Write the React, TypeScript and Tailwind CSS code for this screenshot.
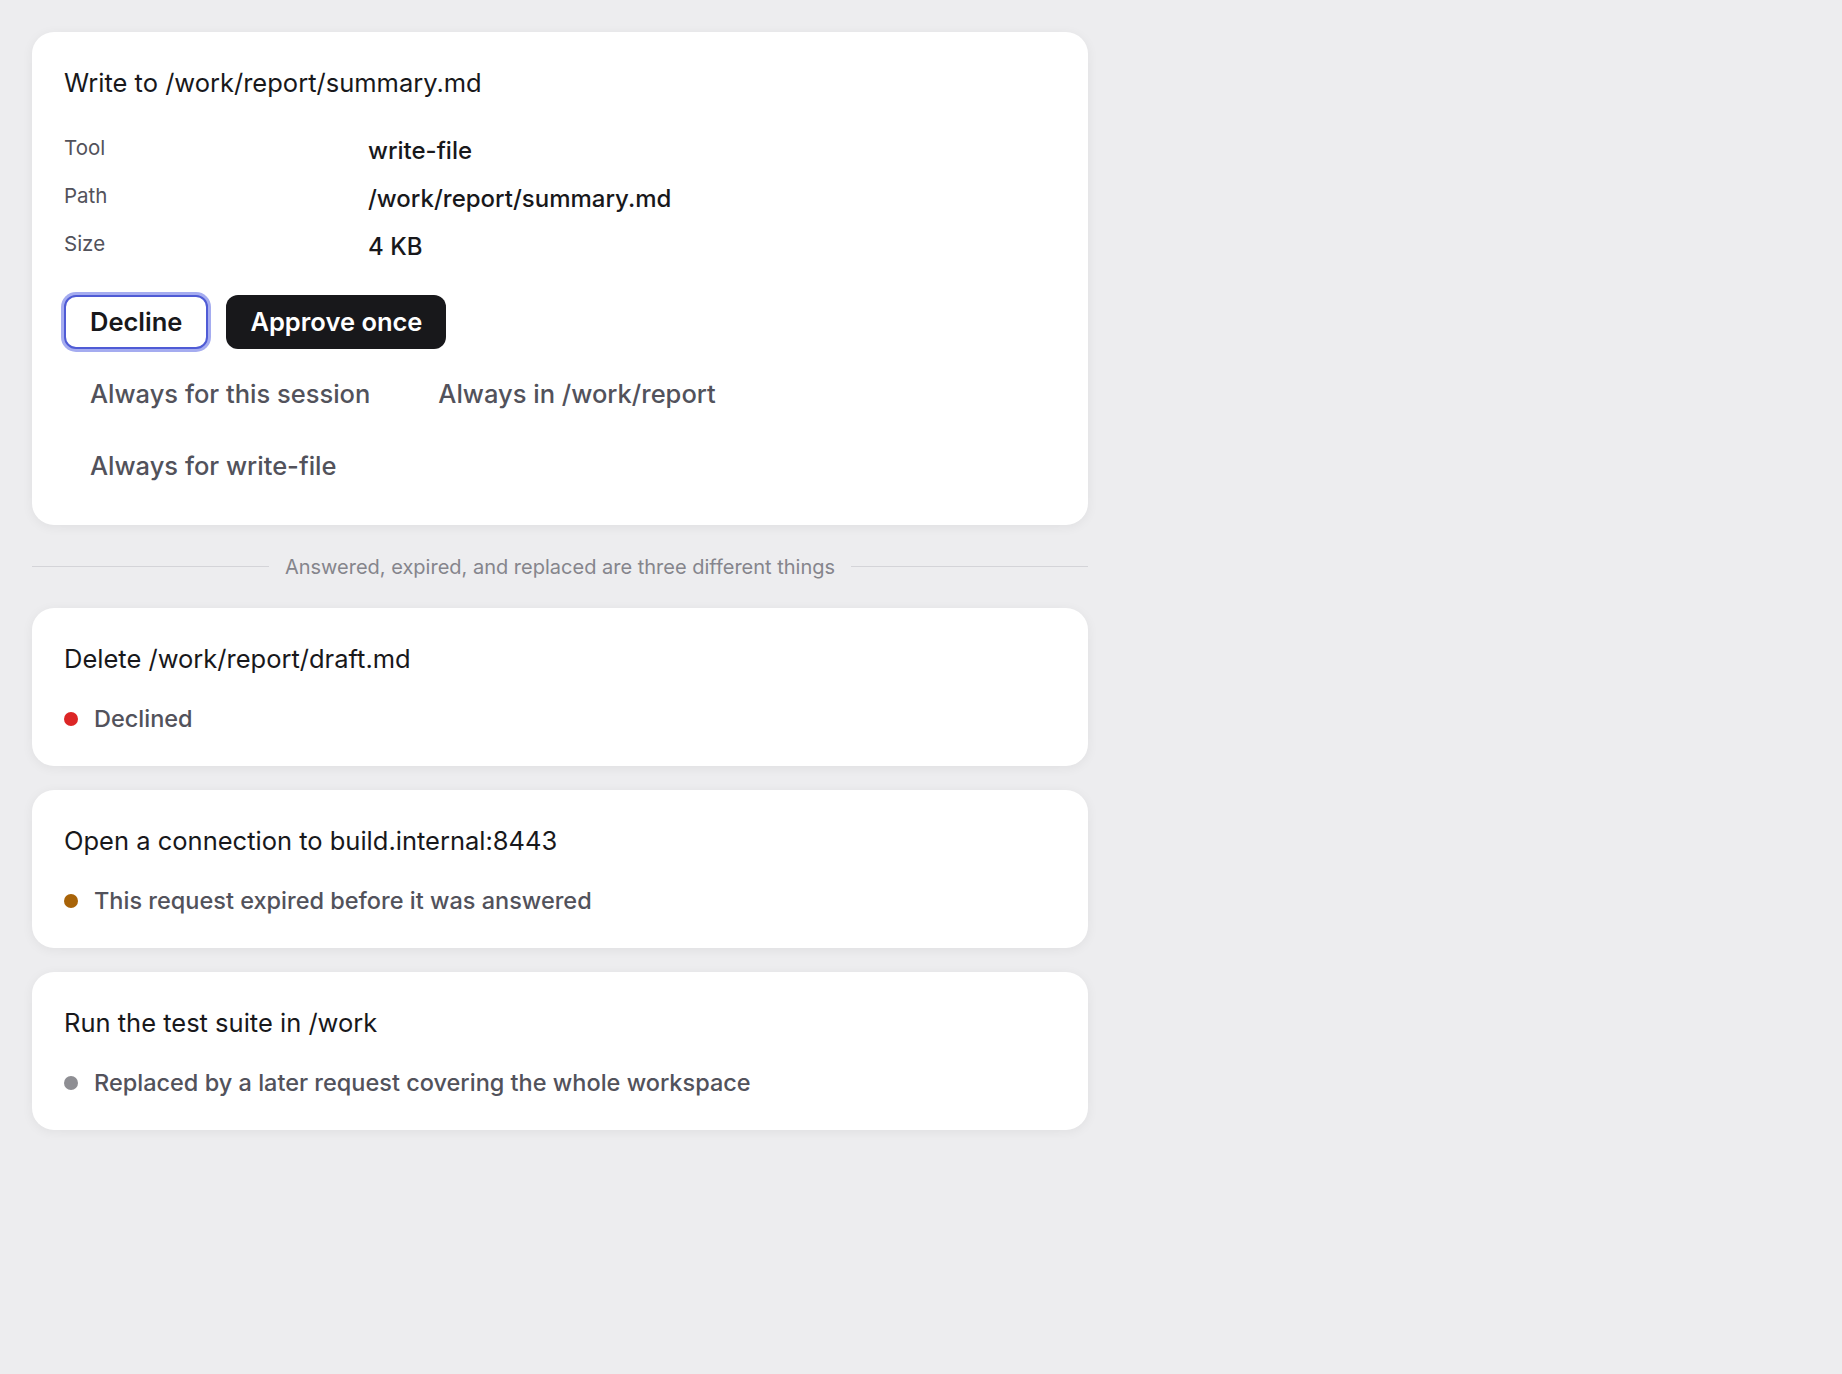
import { ReactNode } from "react";

type Status = "declined" | "expired" | "replaced";

const dotColor: Record<Status, string> = {
  declined: "bg-[#dc2626]",
  expired: "bg-[#a86308]",
  replaced: "bg-[#8e8e93]",
};

const details = [
  { label: "Tool", value: "write-file" },
  { label: "Path", value: "/work/report/summary.md" },
  { label: "Size", value: "4 KB" },
];

const scopes = ["Always for this session", "Always in /work/report", "Always for write-file"];

const resolved: { title: string; status: Status; note: string }[] = [
  { title: "Delete /work/report/draft.md", status: "declined", note: "Declined" },
  { title: "Open a connection to build.internal:8443", status: "expired", note: "This request expired before it was answered" },
  { title: "Run the test suite in /work", status: "replaced", note: "Replaced by a later request covering the whole workspace" },
];

function Card({ children }: { children: ReactNode }) {
  return (
    <div className="rounded-[22px] bg-white px-8 py-8 shadow-[0_2px_12px_rgba(0,0,0,0.06)]">
      {children}
    </div>
  );
}

function PendingRequest() {
  return (
    <Card>
      <h2 className="text-[25.5px] leading-[38px] font-normal text-[#18181b]">Write to /work/report/summary.md</h2>

      <dl className="mt-[25px] grid grid-cols-[280px_1fr] gap-x-6">
        {details.map((d) => (
          <div key={d.label} className="contents">
            <dt className="flex h-12 items-center pb-[6px] text-[20.5px] text-[#52525b]">{d.label}</dt>
            <dd className="flex h-12 items-center text-[24px] font-medium text-[#18181b]">{d.value}</dd>
          </div>
        ))}
      </dl>

      <div className="mt-6 flex flex-col gap-[18px]">
        <div className="flex gap-[18px]">
          <button className="h-[54px] rounded-[12px] border-2 border-[#4f5bd5] bg-white px-6 text-[25.5px] font-semibold text-[#18181b] ring-[3px] ring-[#a5acf0]">
            Decline
          </button>
          <button className="h-[54px] rounded-[12px] bg-[#18181b] px-6 text-[25.5px] font-semibold text-white">
            Approve once
          </button>
        </div>
        <div className="flex max-w-[760px] flex-wrap gap-x-4 gap-y-[18px]">
          {scopes.map((s) => (
            <button key={s} className="h-[54px] rounded-[12px] px-[26px] text-[25.5px] font-medium text-[#52525b]">
              {s}
            </button>
          ))}
        </div>
      </div>
    </Card>
  );
}

function Divider({ children }: { children: ReactNode }) {
  return (
    <div className="flex h-[35px] items-center gap-4">
      <div className="h-px flex-1 bg-[#d4d4d8]" />
      <span className="text-[20px] text-[#85858c]">{children}</span>
      <div className="h-px flex-1 bg-[#d4d4d8]" />
    </div>
  );
}

function ResolvedRequest({ title, status, note }: { title: string; status: Status; note: string }) {
  return (
    <Card>
      <h2 className="text-[25.5px] leading-[38px] text-[#18181b]">{title}</h2>
      <div className="mt-[26px] flex items-center gap-4">
        <span className={`h-[14px] w-[14px] shrink-0 rounded-full ${dotColor[status]}`} />
        <span className="text-[23.5px] leading-[30px] font-medium text-[#52525b]">{note}</span>
      </div>
    </Card>
  );
}

export default function App() {
  return (
    <div className="min-h-screen bg-[#ededef] p-8 font-['Inter','Liberation_Sans',sans-serif]">
      <div className="flex w-[1056px] flex-col gap-6">
        <PendingRequest />
        <Divider>Answered, expired, and replaced are three different things</Divider>
        {resolved.map((r) => (
          <ResolvedRequest key={r.title} {...r} />
        ))}
      </div>
    </div>
  );
}
